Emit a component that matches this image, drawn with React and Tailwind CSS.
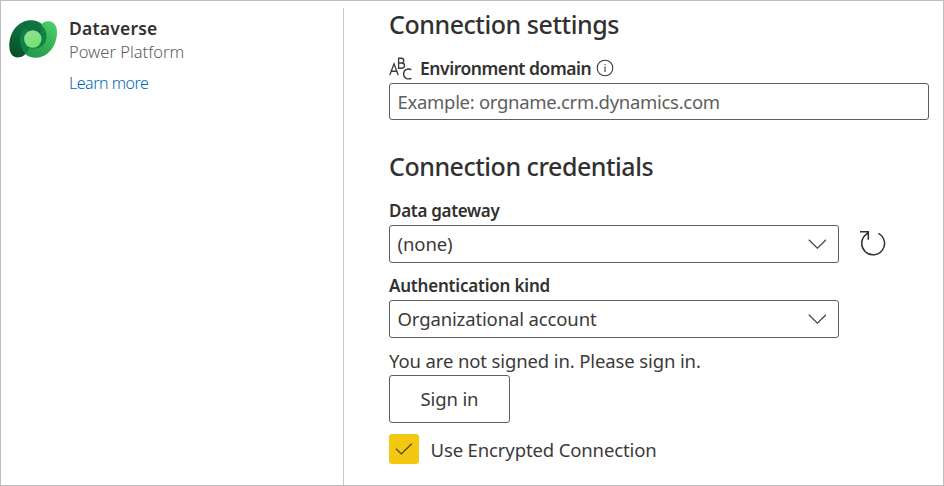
function DataverseLogo() {
  return (
    <svg className="mt-[18px] h-10 w-12 shrink-0" viewBox="0 0 48 40">
      <defs>
        <linearGradient id="dark" x1="0.8" y1="0" x2="0.2" y2="1">
          <stop offset="0" stopColor="#0f7a42" />
          <stop offset="0.5" stopColor="#0c6a3a" />
          <stop offset="1" stopColor="#094e2a" />
        </linearGradient>
        <linearGradient id="bright" x1="0.9" y1="0" x2="0.3" y2="1">
          <stop offset="0" stopColor="#4fd068" />
          <stop offset="0.5" stopColor="#36b457" />
          <stop offset="1" stopColor="#259b50" />
        </linearGradient>
        <linearGradient id="core" x1="0.2" y1="0" x2="0.8" y2="1">
          <stop offset="0" stopColor="#96dd98" />
          <stop offset="1" stopColor="#6ee36e" />
        </linearGradient>
      </defs>
      <path d="M0.3 27C0.3 12 10 1.2 22 1.2C32 1.2 38.5 8 38.5 18L34 32L18 33C15 37 13 38.4 8.5 38.4C3.5 38.4 0.3 34 0.3 27Z" fill="url(#dark)" />
      <path d="M16 9.5C9.5 14 9 27 16.5 35L28 33C34 31 37.5 26 37.5 19C37.5 13 35.5 9 32 6C33 11 32 14 30 15Z" fill="#118247" />
      <path d="M32 6C34 3.2 36 2.2 39.5 2.2C44.7 2.2 48 6.5 48 13C48 27 39 38.8 26.5 38.8C22 38.8 19 37.4 16.5 35.2C18 33.5 19 31 20.5 29C30 31.5 37.5 26 37.5 18C37.5 13 36 9 32 6Z" fill="url(#bright)" />
      <circle cx="23.8" cy="20" r="8.7" fill="url(#core)" />
    </svg>
  );
}

function TextTypeIcon() {
  return (
    <svg className="h-6 w-6 shrink-0" viewBox="0 0 24 24" fill="none" stroke="#3b3a39" strokeWidth="1.35">
      <path d="M0.8 19L5 7.8L9.2 19M2.2 15.2H7.8" />
      <path d="M9.6 2.2V12.2H12.6C16.5 12.2 16.5 7 12.6 7H9.6M12.6 7C15.6 7 15.6 2.2 12.3 2.2H9" />
      <path d="M22.4 13.6C18.5 12 14.6 13.8 14.6 18C14.6 22.2 18.5 23.8 22.4 22.4" />
    </svg>
  );
}

function InfoIcon() {
  return (
    <svg className="ml-[5px] h-[18px] w-[18px]" viewBox="0 0 18 18" fill="none" stroke="#3b3a39" strokeWidth="1.1">
      <circle cx="9" cy="9" r="7.8" />
      <path d="M9 7.6V13M9 4.9V6.1" />
    </svg>
  );
}

function Chevron() {
  return (
    <svg className="h-[10px] w-[18px]" viewBox="0 0 18 10" fill="none" stroke="#3b4a50" strokeWidth="1.2">
      <path d="M0.8 0.8L9.4 9.2L18 0.8" />
    </svg>
  );
}

function Select({ children }) {
  return (
    <div className="flex h-[38px] w-[450px] items-center justify-between rounded-[3px] border border-[#605e5c] pr-3 pl-[7.5px] text-[18.5px]">
      {children}
      <Chevron />
    </div>
  );
}

export default function App() {
  return (
    <div className="flex h-[486px] w-[944px] overflow-hidden border border-[#bdbdbd] bg-white font-['Noto_Sans',sans-serif] whitespace-nowrap text-[#3b3a39]">
      <aside className="mt-[7px] flex w-[343px] shrink-0 border-r border-[#c8c8c8] pl-2">
        <div className="-mt-[7px]">
          <DataverseLogo />
        </div>
        <div className="ml-3 pt-2">
          <div className="h-6 text-[17.5px] leading-6 font-semibold text-[#323130]"><span className="tracking-[0.2px]">Dataverse</span></div>
          <div className="h-6 text-[16.5px] leading-6 font-light text-[#605e5c]"><span>Power Platform</span></div>
          <a className="mt-[7px] block h-6 text-[16px] leading-6 font-light text-[#0067b8]"><span className="tracking-[-0.5px]">Learn more</span></a>
        </div>
      </aside>
      <main className="flex w-[585px] flex-col pl-[45px]">
        <h2 className="mt-[7px] h-8 text-[25px] leading-8 font-medium text-[#323130]"><span className="tracking-[-0.46px]">Connection settings</span></h2>
        <div className="mt-4 flex h-6 items-center text-[17.5px] font-semibold text-[#323130]">
          <TextTypeIcon />
          <span className="ml-[7px] tracking-[-0.45px]">Environment domain</span>
          <InfoIcon />
        </div>
        <div className="mt-[3px] flex h-[37px] w-[540px] items-center rounded-[3px] border border-[#605e5c] pl-[7.5px] text-[18.5px] text-[#605e5c]">
          <span className="tracking-[-0.3px]">Example: orgname.crm.dynamics.com</span>
        </div>
        <h2 className="mt-[30px] h-8 text-[25px] leading-8 font-medium text-[#323130]"><span className="tracking-[-0.48px]">Connection credentials</span></h2>
        <div className="mt-[17px] h-6 text-[17px] leading-6 font-semibold text-[#323130]"><span className="tracking-[-0.3px]">Data gateway</span></div>
        <div className="mt-[2px] flex items-center">
          <Select><span className="tracking-[-0.1px]">(none)</span></Select>
          <svg className="ml-5 h-7 w-7" viewBox="0 0 28 28" fill="none" stroke="#323130" strokeWidth="1.5">
            <path d="M1 1.8H9.3V9.8M9.3 2L7.5 4.2A11.4 11.4 0 1 0 19.3 3.3" />
          </svg>
        </div>
        <div className="mt-[11px] h-6 text-[17px] leading-6 font-semibold text-[#323130]"><span className="tracking-[-0.2px]">Authentication kind</span></div>
        <div className="mt-[2px]">
          <Select><span className="tracking-[-0.13px]">Organizational account</span></Select>
        </div>
        <div className="mt-[10px] h-[27px] text-[18.5px] leading-[26px]"><span className="tracking-[-0.12px]">You are not signed in. Please sign in.</span></div>
        <button className="flex h-12 w-[121px] items-center justify-center rounded-[3px] border border-[#605e5c] text-[18.5px]"><span className="tracking-[-0.13px]">Sign in</span></button>
        <label className="mt-[11px] flex h-[30px] items-center text-[18.5px]">
          <span className="flex h-[30px] w-[30px] items-center justify-center rounded-[3px] bg-[#f2c811]">
            <svg className="h-3 w-[18px]" viewBox="0 0 18 12" fill="none" stroke="#4d4320" strokeWidth="1.2">
              <path d="M1 5.8L6.3 11L16.8 0.8" />
            </svg>
          </span>
          <span className="ml-[11.5px] pt-[2px] tracking-[-0.13px]">Use Encrypted Connection</span>
        </label>
      </main>
    </div>
  );
}
